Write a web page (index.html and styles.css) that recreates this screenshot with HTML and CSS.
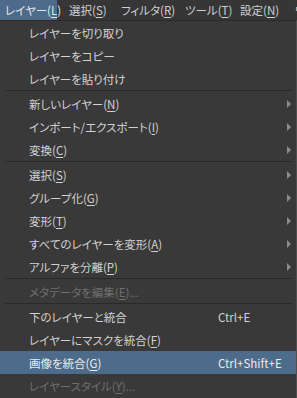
FILE: index.html
```html
<!DOCTYPE html>
<html lang="ja">
<head>
<meta charset="utf-8">
<link rel="stylesheet" href="styles.css">
</head>
<body>
<div class="menubar">
  <div class="mb-item w48 active">レイヤー(<u>L</u>)</div>
  <div class="mb-item w36">選択(<u>S</u>)</div>
  <div class="mb-item w48">フィルタ(<u>R</u>)</div>
  <div class="mb-item w39">ツール(<u>T</u>)</div>
  <div class="mb-item w39">設定(<u>N</u>)</div>
  <div class="mb-item">ウィンドウ(<u>W</u>)</div>
</div>
<div class="menu">
  <div class="item"><span class="label">レイヤーを切り取り</span></div>
  <div class="item"><span class="label">レイヤーをコピー</span></div>
  <div class="item"><span class="label">レイヤーを貼り付け</span></div>
  <div class="sep"></div>
  <div class="item sub"><span class="label">新しいレイヤー(<u>N</u>)</span></div>
  <div class="item sub"><span class="label">インポート/エクスポート(<u>I</u>)</span></div>
  <div class="item sub"><span class="label">変換(<u>C</u>)</span></div>
  <div class="sep"></div>
  <div class="item sub"><span class="label">選択(<u>S</u>)</span></div>
  <div class="item sub"><span class="label">グループ化(<u>G</u>)</span></div>
  <div class="item sub"><span class="label">変形(<u>T</u>)</span></div>
  <div class="item sub"><span class="label">すべてのレイヤーを変形(<u>A</u>)</span></div>
  <div class="item sub"><span class="label">アルファを分離(<u>P</u>)</span></div>
  <div class="sep"></div>
  <div class="item disabled"><span class="label">メタデータを編集(<u>E</u>)...</span></div>
  <div class="sep"></div>
  <div class="item"><span class="label">下のレイヤーと統合</span><span class="key">Ctrl+E</span></div>
  <div class="item"><span class="label">レイヤーにマスクを統合(<u>F</u>)</span></div>
  <div class="item hover"><span class="label">画像を統合(<u>G</u>)</span><span class="key">Ctrl+Shift+E</span></div>
  <div class="item disabled"><span class="label">レイヤースタイル(<u>Y</u>)...</span></div>
</div>
</body>
</html>
```
FILE: styles.css
```css
html, body {
  margin: 0;
  padding: 0;
  background: #393939;
  overflow: hidden;
}
body {
  width: 297px;
  height: 398px;
  font-family: "Noto Sans CJK JP", "Noto Sans", sans-serif;
  font-size: 11.5px;
  font-feature-settings: "palt";
  color: #d2d2d2;
}
u {
  text-decoration-thickness: 1px;
  text-underline-offset: 2px;
}
.menubar {
  display: flex;
  height: 20px;
  background: #363636;
  gap: 7px;
  white-space: nowrap;
  overflow: hidden;
}
.mb-item {
  flex: none;
  padding: 0 4px 0 5px;
  line-height: 20px;
  color: #cfcfcf;
}
.mb-item.w48 { width: 48px; }
.mb-item.w36 { width: 36px; }
.mb-item.w39 { width: 39px; }
.mb-item.active {
  background: #4d6b8a;
  color: #e6e6e6;
}
.menu {
  border-top: 1px solid #2a2a2a;
  border-right: 1px solid #4f4f4f;
  background: #393939;
  height: 377px;
}
.item {
  position: relative;
  display: flex;
  align-items: center;
  height: 23px;
  padding-left: 29px;
  white-space: nowrap;
}
.item .label {
  flex: 0 0 189px;
}
.item .key {
  flex: none;
}
.item.sub::after {
  content: "";
  position: absolute;
  right: 5px;
  top: 8px;
  border-left: 4px solid #8c8c8c;
  border-top: 4px solid transparent;
  border-bottom: 4px solid transparent;
}
.item.disabled {
  color: #6f6f6f;
}
.item.hover {
  background: #4d6b8a;
  color: #ececec;
}
.sep {
  height: 2px;
  margin: 0 4px 0 5px;
  box-sizing: border-box;
  border-top: 1px solid #2a2a2a;
}
```
